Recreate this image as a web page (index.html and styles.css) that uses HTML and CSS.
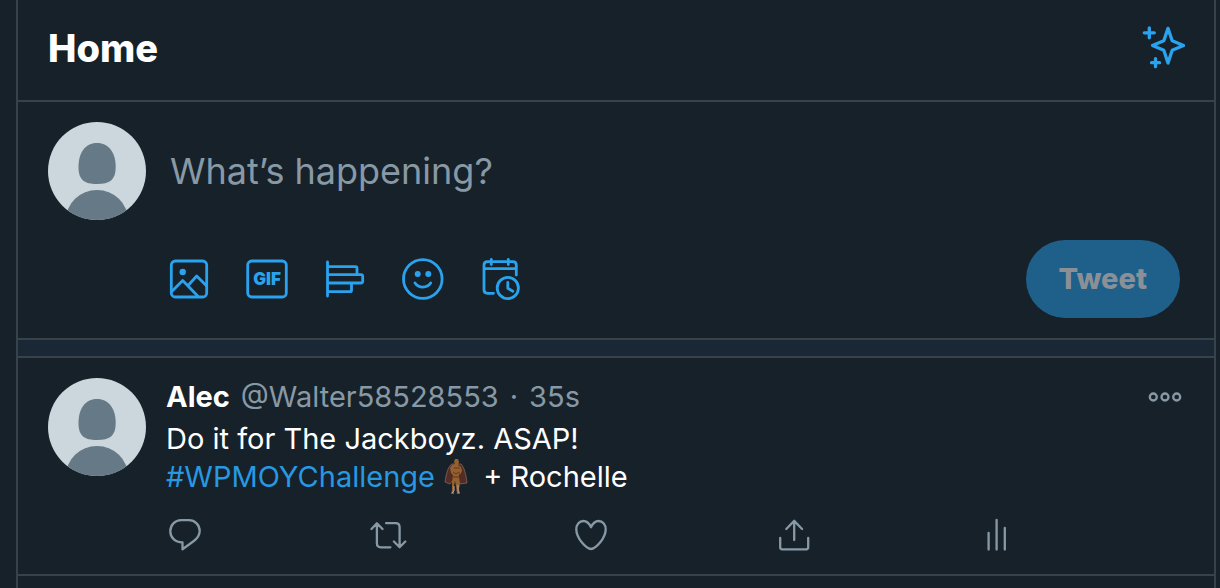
FILE: index.html
```html
<!DOCTYPE html>
<html lang="en">
<head>
<meta charset="utf-8">
<meta name="viewport" content="width=device-width, initial-scale=1">
<title>Home</title>
<link rel="stylesheet" href="styles.css">
</head>
<body>
<main class="timeline">
  <header class="topbar">
    <h1 class="title">Home</h1>
    <button class="icon-button accent" type="button" aria-label="Top Tweets">
      <svg class="icon-large sparkle" viewBox="0 0 46 46">
        <path d="M28 4.400l4.200 12.400L43.500 21.500l-11.300 4.700L28 39l-4.200-12.800L12.500 21.500l11.300-4.700z"/>
        <path d="M9.300 3.800v10M4.300 8.800h10M15.500 34.700v8M11.500 38.700h8"/>
      </svg>
    </button>
  </header>

  <form class="composer">
    <svg class="avatar" viewBox="0 0 98 98" role="img" aria-label="Your profile">
      <rect class="avatar-back" width="98" height="98"/>
      <path class="avatar-front" d="M49 21c12 0 18.700 10 18.700 24 0 13-6 17-18.700 17s-18.500-4-18.500-17C30.500 31 37 21 49 21z"/>
      <ellipse class="avatar-front" cx="49" cy="98" rx="31" ry="30"/>
    </svg>
    <div class="composer-body">
      <input class="composer-input" type="text" aria-label="Tweet text" placeholder="What’s happening?">
      <div class="toolbar">
        <div class="tools">
          <button class="icon-button accent" type="button" aria-label="Add photos">
            <svg class="icon-large" viewBox="0 0 46 46">
              <rect x="5.300" y="5" width="35.400" height="36" rx="4"/>
              <circle class="solid" cx="16.700" cy="16" r="3.200"/>
              <path d="M5.700 35.500l11-11 15 15.500M23 28.500l7.700-8.500 10 10"/>
            </svg>
          </button>
          <button class="icon-button accent" type="button" aria-label="Add a GIF">
            <svg class="icon-large" viewBox="0 0 46 46">
              <rect x="3.700" y="5" width="38.600" height="36" rx="4"/>
              <text class="gif-label" x="23" y="29" text-anchor="middle">GIF</text>
            </svg>
          </button>
          <button class="icon-button accent" type="button" aria-label="Add poll">
            <svg class="icon-large" viewBox="0 0 46 46">
              <path d="M5.500 6v34M5.500 10.700H33.500q1.500 0 1.500 1.500v6.500M5.500 18.700H39q1.700 0 1.700 1.700v4.900q0 1.700-1.700 1.700H5.500M29.500 27v7.200q0 1.500-1.500 1.500H5.500"/>
            </svg>
          </button>
          <button class="icon-button accent" type="button" aria-label="Add emoji">
            <svg class="icon-large" viewBox="0 0 46 46">
              <circle cx="22.800" cy="23" r="19.300"/>
              <circle class="solid" cx="17.700" cy="18" r="3"/>
              <circle class="solid" cx="28.300" cy="18" r="3"/>
              <path d="M15 27c3.600 5.400 12 5.400 15.700 0"/>
            </svg>
          </button>
          <button class="icon-button accent" type="button" aria-label="Schedule">
            <svg class="icon-large" viewBox="0 0 46 46">
              <path d="M15.500 37.300H9.500Q6 37.300 6 33.800V9.200q0-3.500 3.500-3.500H34.800q3.500 0 3.500 3.500V19M6 12.700h32.300M13.300 3.500v5M30.300 3.500v5"/>
              <circle cx="29.800" cy="32" r="10.600"/>
              <path d="M29.800 26.500v5.800l5 2.900"/>
            </svg>
          </button>
        </div>
        <button class="submit" type="submit" disabled>Tweet</button>
      </div>
    </div>
  </form>

  <div class="divider"></div>

  <article class="tweet">
    <svg class="avatar" viewBox="0 0 98 98" role="img" aria-label="Alec">
      <rect class="avatar-back" width="98" height="98"/>
      <path class="avatar-front" d="M49 21c12 0 18.700 10 18.700 24 0 13-6 17-18.700 17s-18.500-4-18.500-17C30.500 31 37 21 49 21z"/>
      <ellipse class="avatar-front" cx="49" cy="98" rx="31" ry="30"/>
    </svg>
    <div class="tweet-body">
      <div class="byline">
        <a class="author" href="#alec">Alec</a>
        <span class="meta">@Walter58528553</span>
        <span class="meta">·</span>
        <span class="meta">35s</span>
        <button class="icon-button muted more" type="button" aria-label="More">
          <svg class="icon-small" viewBox="0 0 38 38">
            <circle cx="7.300" cy="19" r="3.500"/><circle cx="19" cy="19" r="3.500"/><circle cx="30.700" cy="19" r="3.500"/>
          </svg>
        </button>
      </div>
      <p class="tweet-text">Do it for The Jackboyz. ASAP!<br><a class="hashtag" href="#WPMOYChallenge">#WPMOYChallenge<svg class="hashflag" viewBox="0 0 38 38" aria-hidden="true">
        <path fill="#532d23" stroke="#84665b" stroke-width=".8" d="M15 6c-4 2-6 11-7 18l5 2 4-5 5 5 8-1C29 16 27 9 24 6z"/>
        <path fill="#95602f" d="M17 4l1-3h3l1 3-1 3 3 2 1 4-2 4-1-3v5l1 6-1 6 1 5h-3l-1-8-1-5-1 5v8h-3l1-4v-8l1-7-2-2-1-5 2-3 3-1z"/>
        <path fill="none" stroke="#63371f" d="M17 10h6M16 14l3 2 3-2M16 19h6"/>
        <path fill="none" stroke="#b8a69b" d="M17 28v5l-2 2M21 27v6l1 2"/>
      </svg></a> + Rochelle</p>
      <div class="actions">
        <button class="icon-button muted" type="button" aria-label="Reply">
          <svg class="icon-small" viewBox="0 0 38 38"><path d="M16.500 33.300v-7C9 26.400 4.300 21.500 4.300 15.200 4.300 9 9 4.200 15 4.200h8c6 0 10.700 4.800 10.700 10.800 0 4.400-2.400 7.400-6.200 10.200z"/></svg>
        </button>
        <button class="icon-button muted" type="button" aria-label="Retweet">
          <svg class="icon-small" viewBox="0 0 38 38"><path d="M1.500 13L6.900 7.300 12.500 13M6.900 8v19.300q0 4 4 4h9.500M16.100 7.200h9.500q4 0 4 4V31M23.900 25.500l5.700 5.700 5.700-5.700"/></svg>
        </button>
        <button class="icon-button muted" type="button" aria-label="Like">
          <svg class="icon-small" viewBox="0 0 38 38"><path d="M18 11.200C16 7 13.500 5 10.500 5 6 5 3.300 8.700 3.300 13.300 3.300 22.500 13.500 33 18 33s14.700-10.500 14.700-19.700C32.700 8.700 30 5 25.500 5 22.500 5 20 7 18 11.200z"/></svg>
        </button>
        <button class="icon-button muted" type="button" aria-label="Share">
          <svg class="icon-small" viewBox="0 0 38 38"><path d="M3.200 22v9.300q0 2 2 2h24q2 0 2-2V22M17.200 24V4.800M9.300 13l7.900-8.100 7.900 8.100"/></svg>
        </button>
        <button class="icon-button muted" type="button" aria-label="Analytics">
          <svg class="icon-small" viewBox="0 0 38 38"><path d="M8.600 16.800v16.800M16.600 4v29.600M24.800 12v21.600"/></svg>
        </button>
      </div>
    </div>
  </article>
</main>
</body>
</html>
```

FILE: styles.css
```css
* {
  box-sizing: border-box;
}

body {
  margin: 0;
  background: #17212a;
  color: #fff;
  font-family: Inter, "Liberation Sans", sans-serif;
  font-size: 29px;
  line-height: 38px;
}

.timeline {
  min-height: 100vh;
  margin: 0 4px 0 16px;
  border: solid #38424b;
  border-width: 0 2px;
}

.topbar {
  display: flex;
  align-items: flex-start;
  justify-content: space-between;
  padding: 24px 28px 28px 30px;
  border-bottom: 2px solid #38424b;
}

.title {
  margin: 0;
  font-size: 38px;
  font-weight: 800;
  line-height: 48px;
}

.icon-button {
  display: flex;
  padding: 0;
  border: 0;
  background: none;
  cursor: pointer;
}

.accent {
  color: #2aa3ef;
}

.muted {
  color: #8899a6;
}

.icon-large,
.icon-small {
  display: block;
  fill: none;
  stroke: currentColor;
  stroke-linecap: round;
  stroke-linejoin: round;
}

.icon-large {
  width: 46px;
  height: 46px;
  stroke-width: 2.8;
}

.icon-small {
  width: 38px;
  height: 38px;
  stroke-width: 2.3;
}

.sparkle {
  stroke-width: 3.3;
}

.solid,
.gif-label {
  fill: currentColor;
  stroke: none;
}

.gif-label {
  font: 900 17px Inter, "Liberation Sans", sans-serif;
}

.composer,
.tweet {
  display: flex;
  gap: 20px;
  padding: 20px 30px;
  border-bottom: 2px solid #38424b;
}

.avatar {
  flex: none;
  width: 98px;
  height: 98px;
  border-radius: 50%;
}

.avatar-back {
  fill: #ccd6dd;
}

.avatar-front {
  fill: #667986;
}

.composer-body,
.tweet-body {
  flex: 1;
  min-width: 0;
}

.composer-body {
  display: grid;
  gap: 20px;
}

.composer-input {
  width: 100%;
  height: 98px;
  padding: 0 4px;
  border: 0;
  outline: 0;
  background: none;
  color: #fff;
  font: inherit;
  font-size: 36px;
}

.composer-input::placeholder {
  color: #8899a6;
  opacity: 1;
}

.toolbar {
  display: flex;
  align-items: center;
  justify-content: space-between;
  padding-right: 4px;
}

.tools {
  display: flex;
  gap: 32px;
}

.submit {
  padding: 20px 33px;
  border: 0;
  border-radius: 40px;
  background: #1f608b;
  color: #8b9097;
  font: inherit;
  font-weight: 800;
}

.divider {
  height: 18px;
  border-bottom: 2px solid #38424b;
  background: #1a2734;
}

.byline {
  display: flex;
  gap: 11px;
}

.author {
  color: #fff;
  font-weight: 700;
  text-decoration: none;
}

.meta {
  color: #8899a6;
}

.more {
  margin-left: auto;
}

.tweet-text {
  margin: 4px 0 20px;
}

.hashtag {
  color: #2798e2;
  text-decoration: none;
}

.hashflag {
  width: 38px;
  height: 38px;
  margin-left: 2px;
  vertical-align: top;
}

.actions {
  display: grid;
  grid-template-columns: repeat(5, 1fr);
  justify-items: start;
}
```
